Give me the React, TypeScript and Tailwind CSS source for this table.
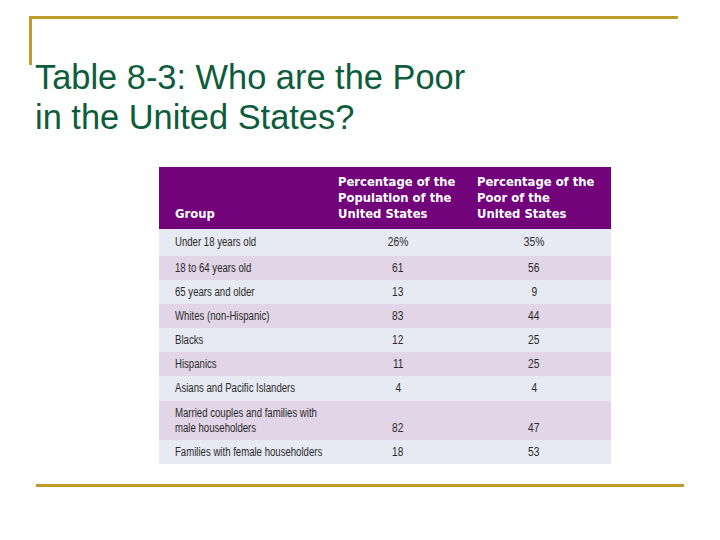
import React from "react";

const rows: { g: string[]; a: string; b: string; h: string; bg: string }[] = [
  { g: ["Under 18 years old"], a: "26%", b: "35%", h: "h-[27px]", bg: "bg-[#e7e9f3]" },
  { g: ["18 to 64 years old"], a: "61", b: "56", h: "h-[24px]", bg: "bg-[#e1d5e7]" },
  { g: ["65 years and older"], a: "13", b: "9", h: "h-[24px]", bg: "bg-[#e7e9f3]" },
  { g: ["Whites (non-Hispanic)"], a: "83", b: "44", h: "h-[24px]", bg: "bg-[#e1d5e7]" },
  { g: ["Blacks"], a: "12", b: "25", h: "h-[24px]", bg: "bg-[#e7e9f3]" },
  { g: ["Hispanics"], a: "11", b: "25", h: "h-[24px]", bg: "bg-[#e1d5e7]" },
  { g: ["Asians and Pacific Islanders"], a: "4", b: "4", h: "h-[25px]", bg: "bg-[#e7e9f3]" },
  { g: ["Married couples and families with", "male householders"], a: "82", b: "47", h: "h-[39px]", bg: "bg-[#e1d5e7]" },
  { g: ["Families with female householders"], a: "18", b: "53", h: "h-[24px]", bg: "bg-[#e7e9f3]" },
];

export default function App() {
  return (
    <div className="w-[720px] h-[540px] bg-white relative overflow-hidden">
      <div className="pt-[16px] pl-[29px]">
        <div className="flex">
          <div className="w-[3px] h-[49px] bg-[#bf9b2a]" />
          <div className="w-[646px] h-[3px] bg-[#bf9b2a]" />
        </div>
      </div>
      <div
        className="pl-[35px] mt-[-8px] text-[34.4px] leading-[40px] text-[#0d5c3b]"
        style={{ fontFamily: "'Liberation Sans', Arial, sans-serif" }}
      >
        <div>Table 8-3: Who are the Poor</div>
        <div>in the United States?</div>
      </div>
      <div className="pl-[159px] mt-[30px]">
        <div className="w-[452px]">
          <div
            className="h-[62px] bg-[#72037a] flex items-end text-white font-bold text-[11.6px] leading-[16px] pb-[7px]"
            style={{ fontFamily: "'DejaVu Sans', sans-serif" }}
          >
            <div className="w-[179px] pl-[16px]">Group</div>
            <div className="w-[139px]">
              Percentage of the
              <br />
              Population of the
              <br />
              United States
            </div>
            <div className="w-[134px]">
              Percentage of the
              <br />
              Poor of the
              <br />
              United States
            </div>
          </div>
          {rows.map((r, i) => (
            <div
              key={i}
              className={`${r.h} ${r.bg} flex items-center text-[12px] leading-[15px] text-[#2a2a2a] whitespace-nowrap`}
              style={{ fontFamily: "'Liberation Sans', Arial, sans-serif" }}
            >
              <div className="w-[179px] pl-[16px]">
                {r.g.map((l, j) => (
                  <div key={j} className="origin-left scale-x-[0.8]">
                    {l}
                  </div>
                ))}
              </div>
              <div className={`w-[120px] text-center ${r.g.length > 1 ? "self-end pb-[4px]" : ""}`}>
                <span className="inline-block scale-x-[0.85]">{r.a}</span>
              </div>
              <div className="w-[34px]" />
              <div className={`w-[84px] text-center ${r.g.length > 1 ? "self-end pb-[4px]" : ""}`}>
                <span className="inline-block scale-x-[0.85]">{r.b}</span>
              </div>
            </div>
          ))}
        </div>
      </div>
      <div className="pl-[36px] mt-[20px]">
        <div className="w-[648px] h-[3px] bg-[#bf9b2a]" />
      </div>
    </div>
  );
}
